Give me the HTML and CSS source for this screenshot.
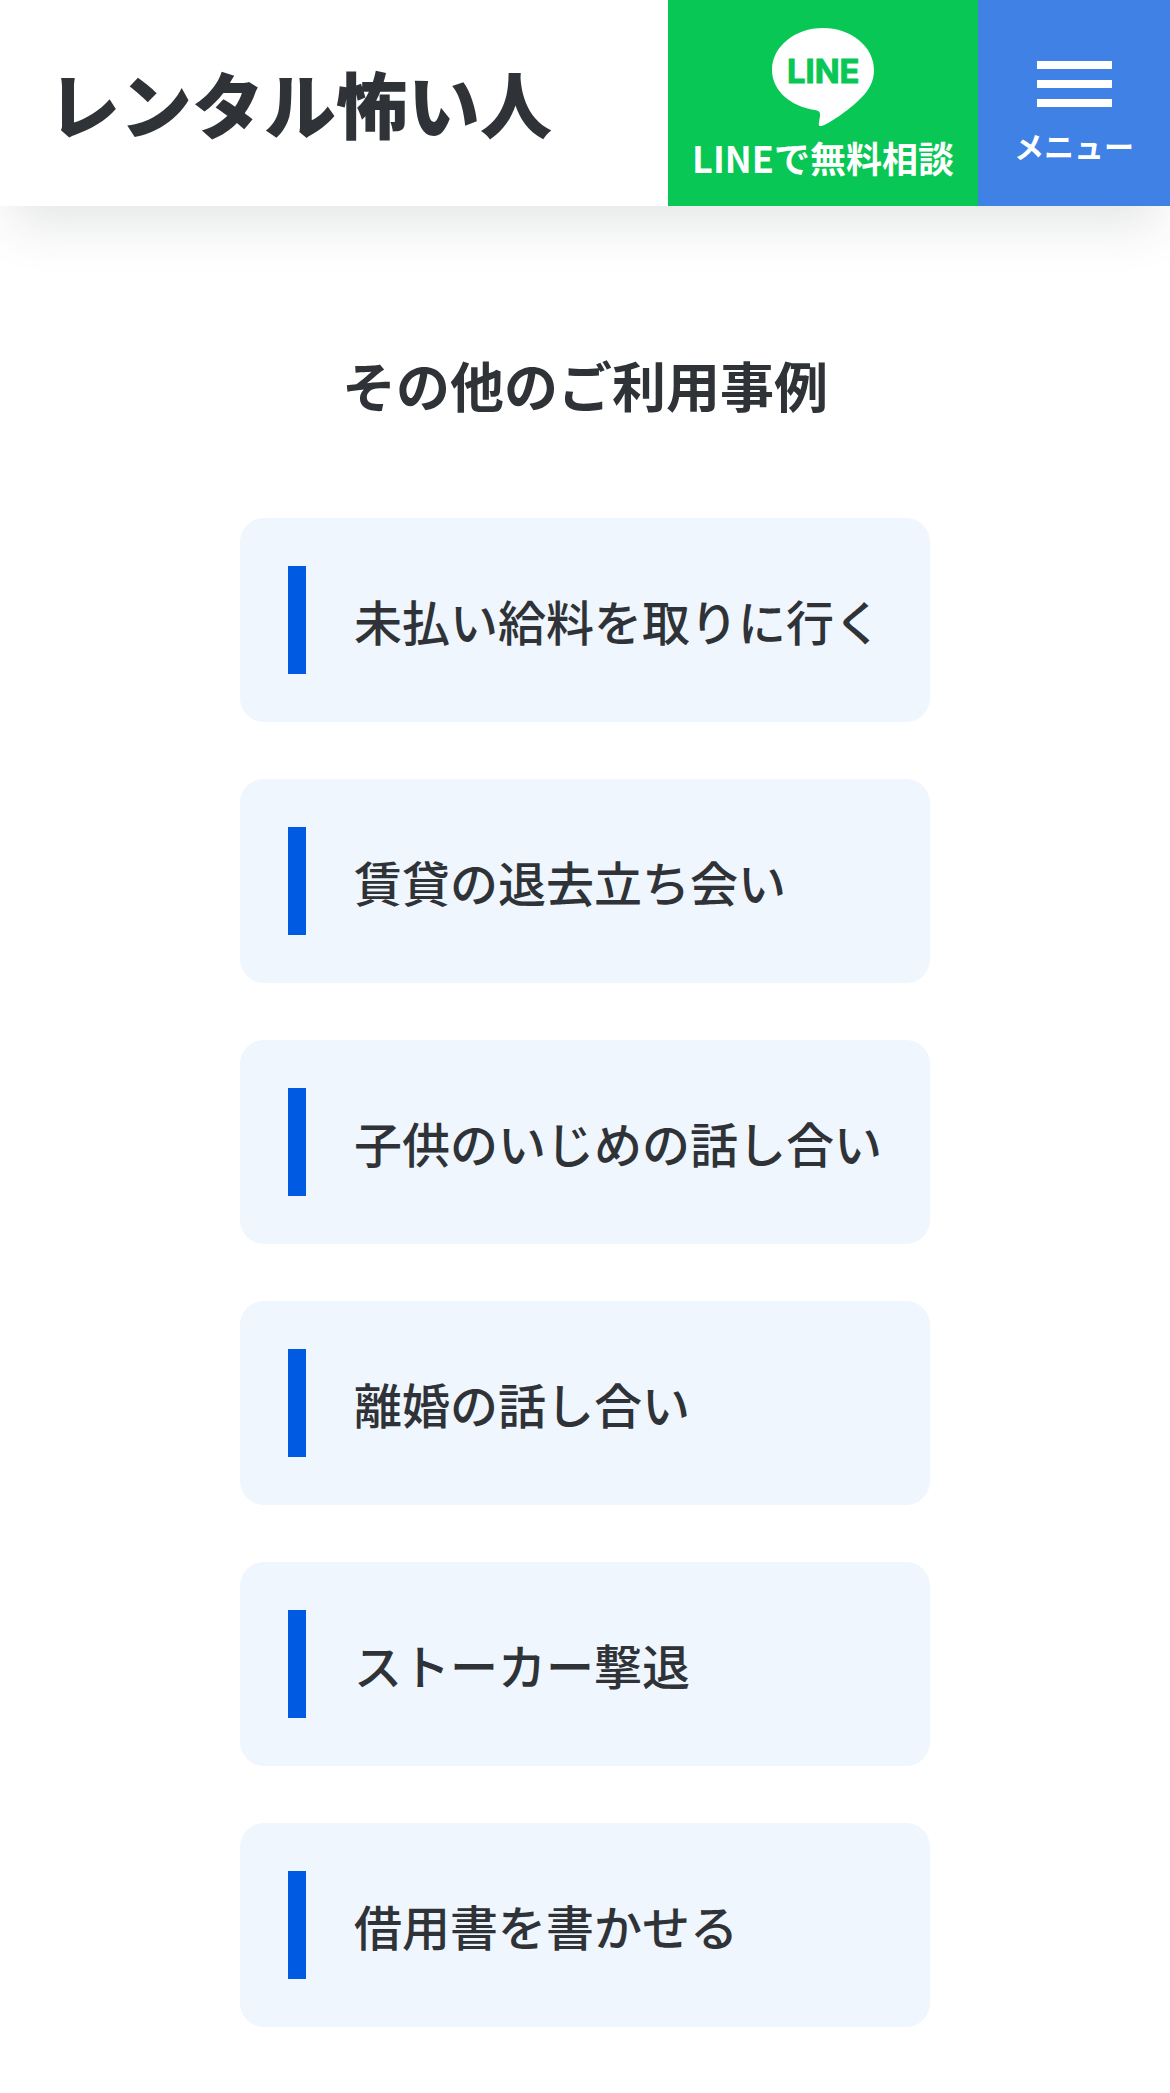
FILE: index.html
```html
<!DOCTYPE html>
<html lang="ja">
  <head>
    <meta charset="UTF-8" />
    <meta name="viewport" content="width=device-width, initial-scale=1.0" />
    <title>レンタル怖い人</title>
    <link rel="stylesheet" href="styles.css">
  </head>
  <body>
    <header class="header">
      <a class="logo" href="#">レンタル怖い人</a>
      <a class="line-btn" href="#">
        <svg class="line-icon" viewBox="0 0 102 98" width="102" height="98" aria-hidden="true">
          <path d="M51 0C79 0 102 18.5 102 42C102 52 98 61 90 69C80 80 58 95 51 97.5C47 99 46.500 97.500 46.900 95L48 88C48.300 84.500 47.500 82.800 43 82C18 78.500 0 62 0 42C0 18.500 23 0 51 0Z" />
          <text x="15" y="54.500" textLength="72.500" lengthAdjust="spacingAndGlyphs">LINE</text>
        </svg>
        <span>LINEで無料相談</span>
      </a>
      <button class="menu-btn" type="button">
        <span class="bars">
          <i></i>
          <i></i>
          <i></i>
        </span>
        <span>メニュー</span>
      </button>
    </header>

    <main class="cases">
      <h2>その他のご利用事例</h2>
      <ul class="case-list">
        <li><a href="#">未払い給料を取りに行く</a></li>
        <li><a href="#">賃貸の退去立ち会い</a></li>
        <li><a href="#">子供のいじめの話し合い</a></li>
        <li><a href="#">離婚の話し合い</a></li>
        <li><a href="#">ストーカー撃退</a></li>
        <li><a href="#">借用書を書かせる</a></li>
      </ul>
    </main>
  </body>
</html>
```
FILE: styles.css
```css
:root {
  --text: #2f3338;
  --card: #eff6fd;
  --accent: #005be2;
  --line: #08c755;
  --menu: #3f81e4;
}

* {
  box-sizing: border-box;
}

body {
  margin: 0;
  background: #fff;
  color: var(--text);
  font-family: "Noto Sans CJK JP", sans-serif;
}

a {
  color: inherit;
  text-decoration: none;
}

.header {
  display: flex;
  height: 206px;
  background: #fff;
  box-shadow: 0 30px 48px -12px rgba(47, 51, 64, 0.13);
}

.logo {
  flex: 1;
  padding: 50px 0 0 48px;
  font-size: 72px;
  font-weight: 900;
  line-height: 104px;
  white-space: nowrap;
}

.line-btn,
.menu-btn {
  display: flex;
  flex-direction: column;
  align-items: center;
  color: #fff;
  font-weight: 700;
  white-space: nowrap;
}

.line-btn {
  width: 310px;
  padding-top: 28px;
  background: var(--line);
  font-size: 36px;
  line-height: 52px;
  gap: 5px;
}

.line-icon {
  display: block;
  fill: #fff;
}

.line-icon text {
  fill: var(--line);
  stroke: var(--line);
  stroke-width: 1;
  font-family: Inter, sans-serif;
  font-size: 33px;
  font-weight: 700;
}

.menu-btn {
  width: 192px;
  padding: 61px 0 0;
  border: none;
  background: var(--menu);
  font-family: inherit;
  font-size: 30px;
  line-height: 44px;
  gap: 16px;
  cursor: pointer;
}

.bars {
  display: flex;
  flex-direction: column;
  gap: 11px;
}

.bars i {
  width: 75px;
  height: 8px;
  background: #fff;
}

.cases {
  padding: 139px 0 66px;
}

.cases h2 {
  margin: 0;
  font-size: 54px;
  font-weight: 700;
  line-height: 80px;
  text-align: center;
}

.case-list {
  display: flex;
  flex-direction: column;
  gap: 57px;
  width: 690px;
  margin: 93px auto 0;
  padding: 0;
  list-style: none;
}

.case-list li {
  height: 204px;
  padding: 48px 0 48px 48px;
  border-radius: 24px;
  background: var(--card);
}

.case-list a {
  display: block;
  height: 108px;
  padding-left: 48px;
  border-left: 18px solid var(--accent);
  font-size: 48px;
  font-weight: 500;
  line-height: 108px;
  white-space: nowrap;
}
```
